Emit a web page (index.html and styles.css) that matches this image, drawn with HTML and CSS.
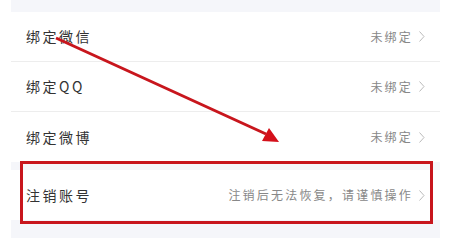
FILE: index.html
```html
<!DOCTYPE html>
<html lang="zh">
<head>
  <meta charset="UTF-8">
  <title>账号绑定</title>
  <link rel="stylesheet" href="styles.css">
</head>
<body>
  <div class="panel">
    <div class="group">
      <div class="row">
        <span class="label">绑定微信</span>
        <span class="value">未绑定</span>
        <svg class="chev" width="6" height="11" viewBox="0 0 6 11"><path d="M0.5 0.5 L5 5.5 L0.5 10.5" fill="none" stroke="#bbb" stroke-width="1"/></svg>
      </div>
      <div class="row">
        <span class="label">绑定QQ</span>
        <span class="value">未绑定</span>
        <svg class="chev" width="6" height="11" viewBox="0 0 6 11"><path d="M0.5 0.5 L5 5.5 L0.5 10.5" fill="none" stroke="#bbb" stroke-width="1"/></svg>
      </div>
      <div class="row">
        <span class="label">绑定微博</span>
        <span class="value">未绑定</span>
        <svg class="chev" width="6" height="11" viewBox="0 0 6 11"><path d="M0.5 0.5 L5 5.5 L0.5 10.5" fill="none" stroke="#bbb" stroke-width="1"/></svg>
      </div>
    </div>
    <div class="group">
      <div class="row">
        <span class="label">注销账号</span>
        <span class="value">注销后无法恢复，请谨慎操作</span>
        <svg class="chev" width="6" height="11" viewBox="0 0 6 11"><path d="M0.5 0.5 L5 5.5 L0.5 10.5" fill="none" stroke="#bbb" stroke-width="1"/></svg>
      </div>
    </div>

    <!-- annotation drawn on top of the screenshot -->
    <div class="mark-box"></div>
    <svg class="mark-arrow" width="456" height="238" viewBox="0 0 456 238">
      <line x1="56" y1="38" x2="266" y2="134" stroke="#c8161d" stroke-width="3"/>
      <polygon points="279,142 262,141 269,128" fill="#d4101a"/>
    </svg>
  </div>
</body>
</html>
```

FILE: styles.css
```css
body {
  margin: 0;
  background: #fff;
  font-family: "Noto Sans CJK SC", "Noto Sans", sans-serif;
}
.panel {
  position: relative;
  width: 429px;
  height: 238px;
  margin-left: 11px;
  padding-top: 12px;
  box-sizing: border-box;
  background: #f5f6fa;
}
.group {
  background: #fff;
  margin-bottom: 8px;
}
.row {
  display: flex;
  align-items: center;
  height: 49px;
  padding: 0 15px 0 15px;
  border-bottom: 1px solid #ededed;
}
.group .row:last-child {
  border-bottom: none;
  height: 50px;
}
.label {
  flex: 1;
  font-size: 14px;
  letter-spacing: 2.5px;
  color: #333;
  margin-top: -1px;
}
.value {
  font-size: 12px;
  letter-spacing: 2.2px;
  color: #888;
  margin-top: -1px;
}
.chev {
  margin-left: 6px;
}
.mark-box {
  position: absolute;
  left: 9px;
  top: 161px;
  width: 413px;
  height: 63px;
  border: 3px solid #c8161d;
  box-sizing: border-box;
}
.mark-arrow {
  position: absolute;
  left: -11px;
  top: 0;
}
```
